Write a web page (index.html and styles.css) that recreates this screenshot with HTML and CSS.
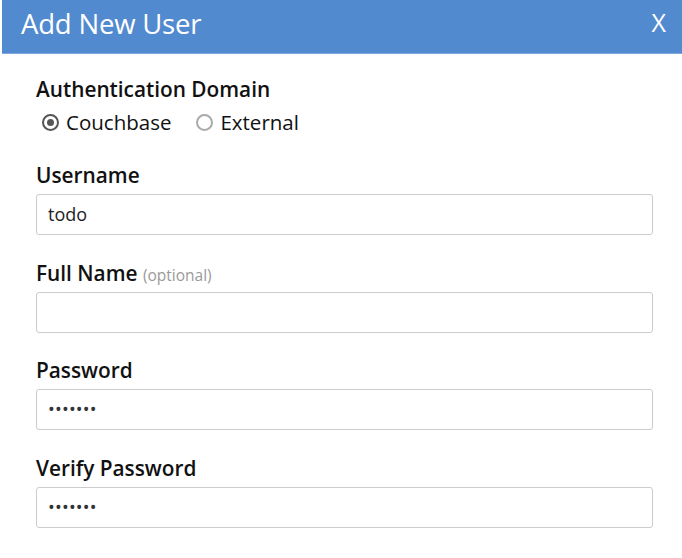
FILE: index.html
```html
<!DOCTYPE html>
<html>
<head>
<meta charset="utf-8">
<link rel="stylesheet" href="styles.css">
</head>
<body>
<div class="dialog">
  <div class="header">
    <h2 class="title">Add New User</h2>
    <span class="close">X</span>
  </div>
  <div class="content">
    <div class="group">
      <div class="label">Authentication Domain</div>
      <div class="radios">
        <label class="radio"><span class="dot checked"></span>Couchbase</label>
        <label class="radio"><span class="dot"></span>External</label>
      </div>
    </div>
    <div class="group">
      <div class="label">Username</div>
      <div class="input">todo</div>
    </div>
    <div class="group">
      <div class="label">Full Name <span class="optional">(optional)</span></div>
      <div class="input"></div>
    </div>
    <div class="group">
      <div class="label">Password</div>
      <div class="input pw">•••••••</div>
    </div>
    <div class="group">
      <div class="label">Verify Password</div>
      <div class="input pw">•••••••</div>
    </div>
  </div>
</div>
</body>
</html>
```
FILE: styles.css
```css
html, body {
  margin: 0;
  padding: 0;
  background: #fff;
}
body {
  font-family: "Open Sans", "Liberation Sans", sans-serif;
  color: #111;
}
.dialog {
  margin-left: 2px;
}
.header {
  background: #528ad0;
  height: 53px;
  border-bottom: 1px solid #7ea8de;
  display: flex;
  align-items: center;
  justify-content: space-between;
  padding: 0 16px 0 19px;
}
.title {
  margin: 0;
  font-weight: 400;
  font-size: 27.5px;
  color: #fff;
  letter-spacing: -0.2px;
  margin-top: -6px;
}
.close {
  color: #fff;
  font-size: 25px;
  margin-top: -10px;
}
.content {
  padding: 21px 29px 0 34px;
}
.group {
  margin-bottom: 23.5px;
}
.label {
  font-size: 20.8px;
  font-weight: 600;
  line-height: 28px;
  height: 28px;
  margin-bottom: 5px;
}
.optional {
  font-size: 15.5px;
  font-weight: 400;
  line-height: 1;
  color: #9a9a9a;
}
.radios {
  display: flex;
  gap: 25px;
  margin-top: 6px;
  margin-bottom: 26px;
  padding-left: 6px;
}
.radio {
  display: flex;
  align-items: center;
  gap: 7px;
  font-size: 20.5px;
  line-height: 26px;
}
.dot {
  width: 13px;
  height: 13px;
  border: 2px solid #aaa;
  border-radius: 50%;
  box-sizing: content-box;
  position: relative;
}
.dot.checked {
  border-color: #555;
}
.dot.checked::after {
  content: "";
  position: absolute;
  left: 3px;
  top: 3px;
  width: 7px;
  height: 7px;
  border-radius: 50%;
  background: #555;
}
.input {
  height: 39px;
  border: 1px solid #ccc;
  border-radius: 3px;
  box-sizing: content-box;
  padding: 0 11px;
  font-size: 18px;
  line-height: 39px;
  color: #222;
}
.input.pw {
  font-size: 18px;
  letter-spacing: 0.2px;
  color: #333;
}
```
